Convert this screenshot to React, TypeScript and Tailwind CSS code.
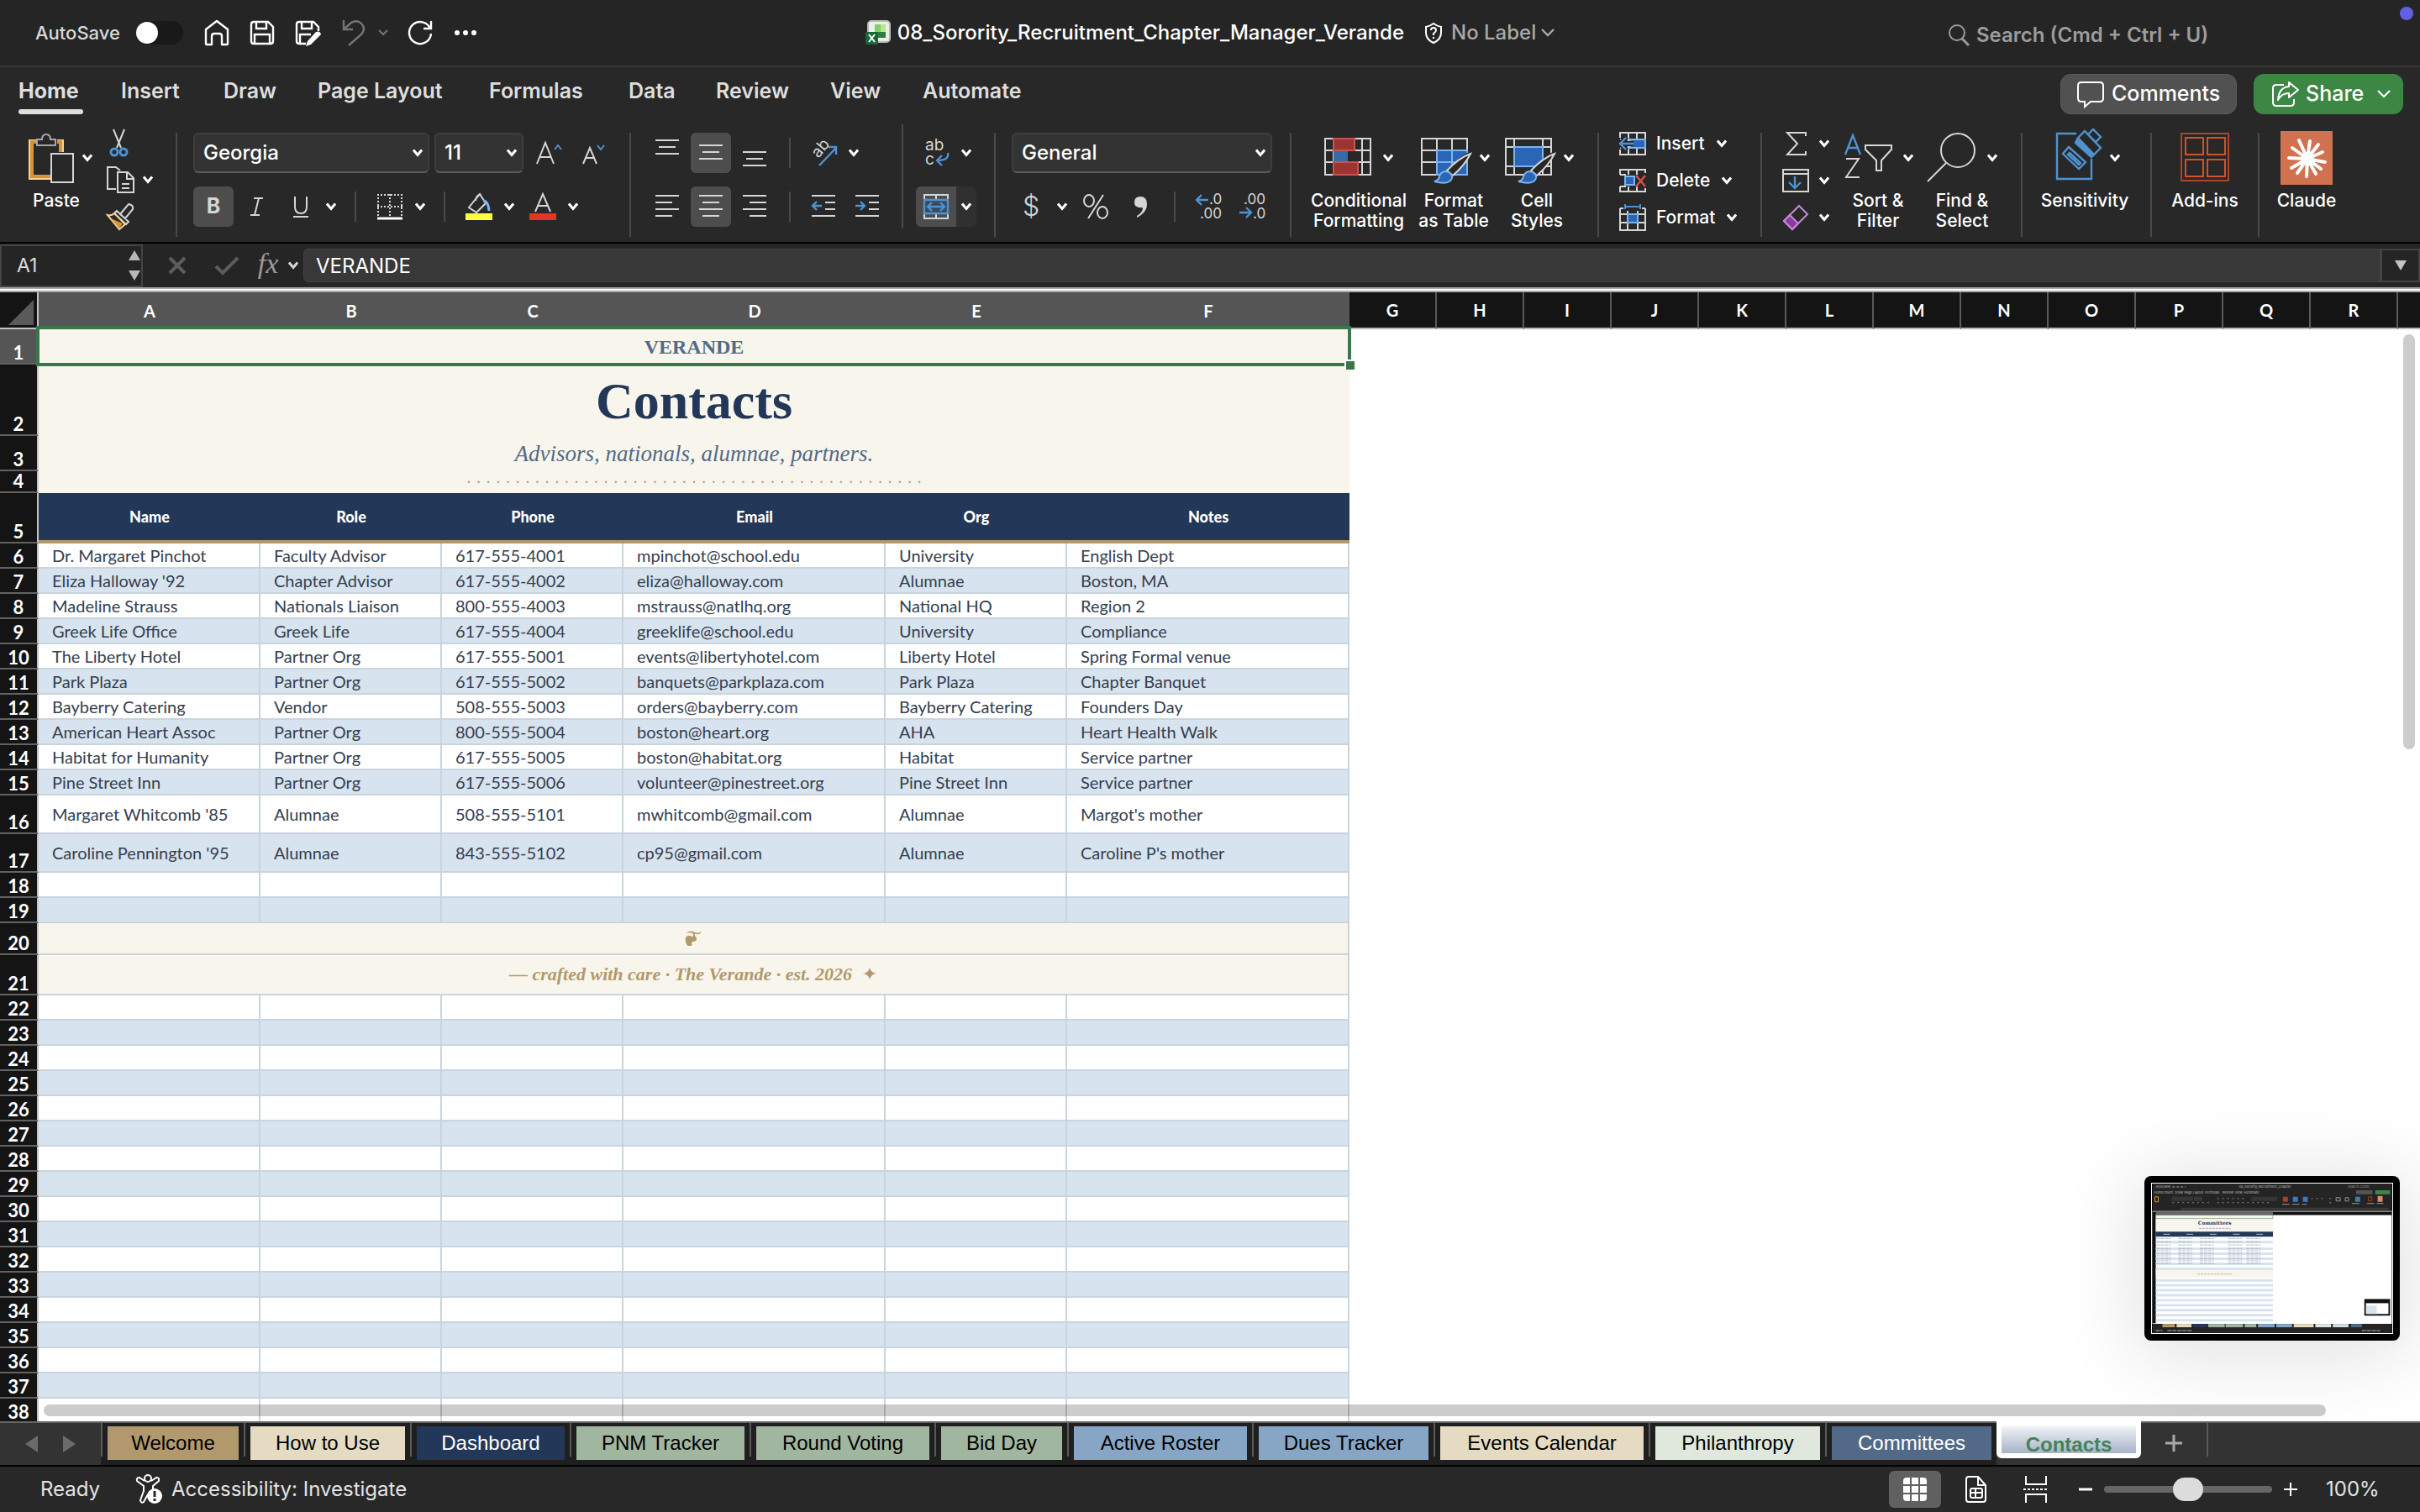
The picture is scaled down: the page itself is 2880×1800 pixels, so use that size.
import type { ReactNode } from 'react'
import clsx from 'clsx'

const UI = "font-[Inter,'Liberation_Sans',sans-serif]"
const SERIF = "font-['Liberation_Serif',serif]"

const menuTabs = [
  { name: 'Home', cls: 'w-[122px]' },
  { name: 'Insert', cls: 'w-[122px]' },
  { name: 'Draw', cls: 'w-[112px]' },
  { name: 'Page Layout', cls: 'w-[204px]' },
  { name: 'Formulas', cls: 'w-[166px]' },
  { name: 'Data', cls: 'w-[104px]' },
  { name: 'Review', cls: 'w-[136px]' },
  { name: 'View', cls: 'w-[110px]' },
  { name: 'Automate', cls: 'w-[130px]' },
]

const usedColumns = ['A', 'B', 'C', 'D', 'E', 'F']
const freeColumns = ['G', 'H', 'I', 'J', 'K', 'L', 'M', 'N', 'O', 'P', 'Q', 'R']
const headings = ['Name', 'Role', 'Phone', 'Email', 'Org', 'Notes']

const contacts = [
  ['Dr. Margaret Pinchot', 'Faculty Advisor', '617-555-4001', 'mpinchot@school.edu', 'University', 'English Dept'],
  ["Eliza Halloway '92", 'Chapter Advisor', '617-555-4002', 'eliza@halloway.com', 'Alumnae', 'Boston, MA'],
  ['Madeline Strauss', 'Nationals Liaison', '800-555-4003', 'mstrauss@natlhq.org', 'National HQ', 'Region 2'],
  ['Greek Life Office', 'Greek Life', '617-555-4004', 'greeklife@school.edu', 'University', 'Compliance'],
  ['The Liberty Hotel', 'Partner Org', '617-555-5001', 'events@libertyhotel.com', 'Liberty Hotel', 'Spring Formal venue'],
  ['Park Plaza', 'Partner Org', '617-555-5002', 'banquets@parkplaza.com', 'Park Plaza', 'Chapter Banquet'],
  ['Bayberry Catering', 'Vendor', '508-555-5003', 'orders@bayberry.com', 'Bayberry Catering', 'Founders Day'],
  ['American Heart Assoc', 'Partner Org', '800-555-5004', 'boston@heart.org', 'AHA', 'Heart Health Walk'],
  ['Habitat for Humanity', 'Partner Org', '617-555-5005', 'boston@habitat.org', 'Habitat', 'Service partner'],
  ['Pine Street Inn', 'Partner Org', '617-555-5006', 'volunteer@pinestreet.org', 'Pine Street Inn', 'Service partner'],
  ["Margaret Whitcomb '85", 'Alumnae', '508-555-5101', 'mwhitcomb@gmail.com', 'Alumnae', "Margot's mother"],
  ["Caroline Pennington '95", 'Alumnae', '843-555-5102', 'cp95@gmail.com', 'Alumnae', "Caroline P's mother"],
]

const sheetTabs = [
  { name: 'Welcome', cls: 'w-[156px] bg-[#b1996d] text-black' },
  { name: 'How to Use', cls: 'w-[184px] bg-[#e5dbc2] text-black' },
  { name: 'Dashboard', cls: 'w-[176px] bg-[#233858] text-white' },
  { name: 'PNM Tracker', cls: 'w-[200px] bg-[#a1b69f] text-black' },
  { name: 'Round Voting', cls: 'w-[206px] bg-[#a1b69f] text-black' },
  { name: 'Bid Day', cls: 'w-[144px] bg-[#a1b69f] text-black' },
  { name: 'Active Roster', cls: 'w-[206px] bg-[#87a6c6] text-black' },
  { name: 'Dues Tracker', cls: 'w-[202px] bg-[#87a6c6] text-black' },
  { name: 'Events Calendar', cls: 'w-[242px] bg-[#e5dbc2] text-black' },
  { name: 'Philanthropy', cls: 'w-[196px] bg-[#e0e8dd] text-black' },
  { name: 'Committees', cls: 'w-[190px] bg-[#526a87] text-white' },
]

function Chevron({ className = 'ml-[14px]' }: { className?: string }) {
  return (
    <svg viewBox="0 0 12 10" className={clsx('h-[10px] w-3 shrink-0', className)} fill="none" stroke="currentColor" strokeWidth="3" aria-hidden="true">
      <path d="M1 1.5l5 6 5-6" />
    </svg>
  )
}

function Icon({ w = 32, h = 32, className, children }: { w?: number; h?: number; className?: string; children: ReactNode }) {
  return (
    <svg width={w} height={h} viewBox={`0 0 ${w} ${h}`} className={clsx('shrink-0 overflow-visible', className)} fill="none" stroke="#d6d6d6" strokeWidth="2" aria-hidden="true">
      {children}
    </svg>
  )
}

function Tool({ label, className, active, children }: { label: string; className?: string; active?: boolean; children: ReactNode }) {
  return (
    <button
      type="button"
      aria-label={label}
      className={clsx('flex h-12 shrink-0 items-center justify-center', active && 'rounded-md bg-[#4d4d4d]', className)}
    >
      {children}
    </button>
  )
}

function Divider({ className = 'mt-[10px]' }: { className?: string }) {
  return <div className={clsx('h-[124px] w-0.5 shrink-0 bg-[#4a4a4a]', className)} />
}

function SmallDivider({ className }: { className?: string }) {
  return <div className={clsx('h-9 w-0.5 shrink-0 bg-[#4a4a4a]', className)} />
}

// A tall ribbon button: icon row on top, one or two caption lines below
function BigTool({ caption, className, rowClass, children }: { caption: string[]; className: string; rowClass?: string; children: ReactNode }) {
  return (
    <button type="button" className={clsx('flex shrink-0 flex-col pt-[10px] text-[21px] leading-6 font-medium text-white', className)}>
      <span className={clsx('flex h-15 items-center', rowClass)}>{children}</span>
      <span className="mt-[9px] flex flex-col items-center self-center whitespace-nowrap">
        {caption.map((line) => (
          <span key={line}>{line}</span>
        ))}
      </span>
    </button>
  )
}

function Picker({ label, value, className }: { label: string; value: string; className: string }) {
  return (
    <div className={clsx('grid h-12 shrink-0 items-center rounded-md border-2 border-[#3e3e3e] border-b-[#5c5c5c] bg-[#333]', className)}>
      <select
        aria-label={label}
        className="col-start-1 row-start-1 h-full w-full appearance-none pl-2.5 text-[24px] font-medium text-white"
        defaultValue={value}
      >
        <option>{value}</option>
      </select>
      <Chevron className="pointer-events-none col-start-1 row-start-1 mr-1.5 justify-self-end" />
    </div>
  )
}

function Lines({ rows }: { rows: [number, number, number][] }) {
  return (
    <Icon>
      {rows.map(([x1, x2, y]) => (
        <path key={y} strokeWidth="2" d={`M${x1} ${y}H${x2}`} />
      ))}
    </Icon>
  )
}

function TitleBar() {
  return (
    <header className="grid h-20 shrink-0 grid-cols-[1fr_auto_1fr] items-center border-b-2 border-[#3a3a3a] bg-[#252525] text-white">
      <div className="flex items-center pl-[42px]">
        <label htmlFor="autosave" className="w-[120px] text-[22px] font-medium text-[#d8d8d8]">AutoSave</label>
        <input
          id="autosave"
          type="checkbox"
          role="switch"
          className="h-7 w-14 appearance-none rounded-full bg-[#191919] before:block before:size-[26px] before:translate-y-px before:rounded-full before:bg-white"
        />
        <button type="button" aria-label="Home" className="ml-6">
          <Icon>
            <path stroke="#fff" strokeWidth="2.4" strokeLinejoin="round" d="M3 12L16 2l13 10v17a1 1 0 0 1-1 1h-6V20q0-3-3-3h-6q-3 0-3 3v10H4a1 1 0 0 1-1-1z" />
          </Icon>
        </button>
        <button type="button" aria-label="Save" className="ml-[22px]">
          <Icon>
            <g stroke="#fff" strokeWidth="2.4">
              <path d="M6 3h17l6 6v17q0 3-3 3H6q-3 0-3-3V6q0-3 3-3z" />
              <path d="M9 3v8h12V3M7 29V18h18v11" />
            </g>
          </Icon>
        </button>
        <button type="button" aria-label="Save as" className="ml-[22px]">
          <Icon>
            <g stroke="#fff" strokeWidth="2.4">
              <path d="M14 29H6q-3 0-3-3V6q0-3 3-3h17l6 6v5" />
              <path d="M9 3v8h12V3M7 29V18h13" />
            </g>
            <path fill="#fff" stroke="none" d="M26 15q5-2 6 3L20 30l-6 2 2-6z" />
          </Icon>
        </button>
        <button type="button" aria-label="Undo" className="ml-6 flex items-center text-[#757575]">
          <Icon>
            <path stroke="#757575" strokeWidth="2.4" d="M3 1v11h11M3 12L12 4q7-4 12 1 6 6 0 13L9 31" />
          </Icon>
          <svg viewBox="0 0 12 8" className="ml-3 h-2 w-3" fill="none" stroke="currentColor" strokeWidth="2"><path d="M1 1l5 5 5-5" /></svg>
        </button>
        <button type="button" aria-label="Redo" className="ml-[22px]">
          <Icon>
            <path stroke="#fff" strokeWidth="2.4" d="M29 2v9h-9M28 11A13 13 0 1 0 29 17" />
          </Icon>
        </button>
        <button type="button" aria-label="More" className="ml-6">
          <Icon><path fill="#fff" stroke="none" d="M7 16a3 3 0 1 1-6 0 3 3 0 0 1 6 0M17 16a3 3 0 1 1-6 0 3 3 0 0 1 6 0M27 16a3 3 0 1 1-6 0 3 3 0 0 1 6 0" /></Icon>
        </button>
      </div>
      <div className="flex items-center">
        <Icon w={30} h={30}>
          <rect x="3" y="1" width="26" height="25" rx="4" fill="#e9efe9" stroke="#b9b9b9" />
          <path fill="#7fd069" stroke="none" d="M11 5h7v9h-7z" />
          <path fill="#b5e88f" stroke="none" d="M18 5h6v9h-6z" />
          <path fill="#2e7d3c" stroke="none" d="M11 14h13v7H11z" />
          <rect y="14" width="15" height="15" rx="2" fill="#17693a" stroke="none" />
          <path stroke="#fff" strokeWidth="2" d="M4 17l7 9M11 17l-7 9" />
        </Icon>
        <h1 className="ml-2 text-[24px] font-medium">08_Sorority_Recruitment_Chapter_Manager_Verande</h1>
        <button type="button" className="ml-6 flex items-center text-[24px] font-medium text-[#a9a9a9]">
          <Icon w={22} h={26}>
            <path stroke="#fff" d="M11 2q4 3 9 4v7q0 8-9 12-9-4-9-12V6q5-1 9-4z" />
            <path stroke="#fff" d="M8 10q0-3 3-3t3 3q0 2-3 4v2M11 18v2" />
          </Icon>
          <span className="ml-2.5">No Label</span>
          <svg viewBox="0 0 16 10" className="ml-1.5 h-2.5 w-4" fill="none" stroke="currentColor" strokeWidth="2.4"><path d="M1 1l7 7 7-7" /></svg>
        </button>
      </div>
      <div className="relative flex h-full items-center justify-end pt-1.5 pr-[220px]">
        <Icon w={28} h={28}>
          <circle cx="11" cy="11" r="9" stroke="#9c9c9c" />
          <path stroke="#9c9c9c" strokeWidth="3" d="M17 18l8 8" />
        </Icon>
        <input
          type="search"
          aria-label="Search"
          placeholder="Search (Cmd + Ctrl + U)"
          className="ml-1.5 w-[308px] text-[24px] font-semibold placeholder:text-[#9c9c9c]"
        />
        <span className="absolute top-2 right-2 size-4 rounded-full bg-[#605fe6]" />
      </div>
    </header>
  )
}

function MenuBar() {
  return (
    <nav className="flex h-[68px] shrink-0 items-center pl-[22px]">
      {menuTabs.map((tab, i) => (
        <button key={tab.name} type="button" className={clsx('flex h-12 flex-col items-start pt-0.5 text-[25px] leading-8 text-[#dedede]', i === 0 ? 'font-bold' : 'font-semibold', tab.cls)}>
          {tab.name}
          {i === 0 && <span className="mt-1.5 h-1.5 w-[77px] rounded-full bg-[#dedede]" />}
        </button>
      ))}
      <button type="button" className="mb-1 ml-auto flex h-12 w-[210px] items-center rounded-xl border border-[#5a5a5a] bg-[#515151] pl-[18px] text-[25px] font-medium text-white">
        <Icon w={34}>
          <path stroke="#fff" d="M6 2h22q4 0 4 4v15q0 4-4 4H17l-7 6v-6H6q-4 0-4-4V6q0-4 4-4z" />
        </Icon>
        <span className="ml-2">Comments</span>
      </button>
      <button type="button" className="mr-5 mb-1 ml-5 flex h-12 w-[178px] items-center rounded-xl bg-[#3d8745] pl-5 text-[25px] font-medium text-white">
        <Icon w={34}>
          <path stroke="#fff" d="M16 5H7Q3 5 3 9v17q0 4 4 4h17q4 0 4-4v-4" />
          <path stroke="#fff" strokeLinejoin="round" d="M22 2l11 9-11 9v-5q-9 0-13 8Q10 8 22 7z" />
        </Icon>
        <span className="ml-2">Share</span>
        <svg viewBox="0 0 16 10" className="ml-4 h-2.5 w-4" fill="none" stroke="currentColor" strokeWidth="2"><path d="M1 1l7 7 7-7" /></svg>
      </button>
    </nav>
  )
}

function Brush() {
  return (
    <>
      <path stroke="#282828" strokeWidth="6" d="M57 26q-14 9-26 22" />
      <path fill="#282828" d="M59 25q-14 5-28 20l7 6q14-12 21-26z" />
      <path fill="#2b65b5" stroke="#7db4ee" d="M16 58q5-1 6-6 2-6 8-6 8 2 7 8-3 9-21 4z" />
    </>
  )
}

function Ribbon() {
  return (
    <div className="flex h-[140px] shrink-0 items-start text-white">
      <div className="flex w-[209px] shrink-0 pl-[34px]">
        <BigTool caption={['Paste']} className="w-[76px] pr-2.5">
          <Icon w={54} h={60}>
            <path stroke="#f4d590" strokeWidth="2" d="M9 9H1v46h25M34 9h7v14" />
            <path stroke="#d9913a" strokeWidth="4" d="M11 11H4v41h22M34 11h4v12" />
            <path stroke="#a6a6a6" fill="#282828" d="M10 15V8h6q0-6 5-6t5 6h6v7z" />
            <rect x="27" y="25" width="26" height="34" />
          </Icon>
          <Chevron className="ml-2.5" />
        </BigTool>
        <div className="ml-4 flex flex-col gap-3 pt-1.5">
          <Tool label="Cut" className="h-8! w-8">
            <Icon>
              <path d="M9 0l9 22M22 0L13 22" />
              <circle cx="10" cy="27" r="4" stroke="#4f92d1" strokeWidth="3" />
              <circle cx="21" cy="27" r="4" stroke="#4f92d1" strokeWidth="3" />
            </Icon>
          </Tool>
          <Tool label="Copy" className="h-8!">
            <Icon w={34}>
              <path d="M12 27H2V1h10l5 4M14 7h12l7 7v17H14zM25 8v7h7M19 21h9M19 26h9" />
            </Icon>
            <Chevron className="ml-2.5" />
          </Tool>
          <Tool label="Format painter" className="h-8! w-8">
            <Icon>
              <path fill="#282828" d="M17 13l10-12q6 1 5 6L23 18zM13 9l14 13-3 3L10 12z" />
              <path fill="#282828" stroke="#f4d590" d="M10 12l13 13-7 6L2 14q5 1 8-2z" />
              <path fill="#d9913a" stroke="none" d="M6 18l14 6-4 6z" />
            </Icon>
          </Tool>
        </div>
      </div>
      <Divider />

      <div className="flex w-[538px] shrink-0 flex-col gap-4 pt-[10px] pl-[19px]">
        <div className="flex items-center">
          <Picker label="Font" value="Georgia" className="w-[281px]" />
          <Picker label="Font size" value="11" className="ml-1.5 w-[106px]" />
          <Tool label="Increase font size" className="ml-[14px]">
            <Icon>
              <path d="M2 29L12 4l10 25M5 21h14" />
              <path stroke="#4f92d1" d="M23 12l4-5 4 5" />
            </Icon>
          </Tool>
          <Tool label="Decrease font size" className="ml-[22px]">
            <Icon>
              <path d="M3 29l8-19 8 19M6 22h10" />
              <path stroke="#4f92d1" d="M20 7l4 5 4-5" />
            </Icon>
          </Tool>
        </div>
        <div className="flex items-center">
          <Tool label="Bold" active className="w-12 text-[25px] font-bold text-[#d6d6d6]">B</Tool>
          <Tool label="Italic" className="ml-1 w-12">
            <Icon><path d="M12 6h11M8 26h11M18 6l-5 20" /></Icon>
          </Tool>
          <Tool label="Underline" className="ml-1">
            <Icon w={48}><path d="M17 4v12q0 8 7 8t7-8V4M15 28h18" /></Icon>
            <Chevron className="ml-1.5" />
          </Tool>
          <SmallDivider className="ml-[22px]" />
          <Tool label="Borders" className="ml-6">
            <Icon>
              <path strokeDasharray="2 2" d="M1 2h30M1 16h30M2 1v26M16 1v26M30 1v26" />
              <path stroke="#fff" strokeWidth="3" d="M1 30h30" />
            </Icon>
            <Chevron />
          </Tool>
          <SmallDivider className="ml-[22px]" />
          <Tool label="Fill color" className="ml-6">
            <Icon>
              <path d="M17 1q-5 3-5 8M12 7L4 17l9 6 11-11L17 1z" />
              <path stroke="#7db4ee" strokeWidth="3" d="M21 9q6 0 7 12" />
              <path fill="#ffff40" stroke="none" d="M0 24h32v8H0z" />
            </Icon>
            <Chevron />
          </Tool>
          <Tool label="Font color" className="ml-[18px]">
            <Icon>
              <path d="M7 22L16 1l9 21M10 15h12" />
              <path fill="#e53422" stroke="none" d="M0 24h32v8H0z" />
            </Icon>
            <Chevron />
          </Tool>
        </div>
      </div>
      <Divider />

      <div className="flex w-[322px] shrink-0 flex-col gap-4 pt-[10px] pl-[19px]">
        <div className="flex items-center">
          <Tool label="Align top" className="w-12"><Lines rows={[[2, 30, 1], [6, 26, 9], [2, 30, 17]]} /></Tool>
          <Tool label="Align middle" active className="ml-1 w-12"><Lines rows={[[2, 30, 7], [6, 26, 15], [2, 30, 23]]} /></Tool>
          <Tool label="Align bottom" className="ml-1 w-12"><Lines rows={[[2, 30, 15], [6, 26, 23], [2, 30, 31]]} /></Tool>
          <SmallDivider className="ml-[17px]" />
          <Tool label="Orientation" className="ml-[23px]">
            <Icon>
              <text transform="translate(10 23) rotate(-50)" fill="#d6d6d6" stroke="none" fontSize="19">ab</text>
              <path stroke="#4f92d1" strokeWidth="2.4" d="M11 31L31 10M22 9h9v9" />
            </Icon>
            <Chevron />
          </Tool>
        </div>
        <div className="flex items-center">
          <Tool label="Align left" className="w-12"><Lines rows={[[2, 30, 3], [2, 22, 11], [2, 30, 19], [2, 22, 27]]} /></Tool>
          <Tool label="Align center" active className="ml-1 w-12"><Lines rows={[[2, 30, 3], [6, 26, 11], [2, 30, 19], [6, 26, 27]]} /></Tool>
          <Tool label="Align right" className="ml-1 w-12"><Lines rows={[[2, 30, 3], [10, 30, 11], [2, 30, 19], [10, 30, 27]]} /></Tool>
          <SmallDivider className="ml-[17px]" />
          <Tool label="Decrease indent" className="ml-[23px]">
            <Icon>
              <path d="M2 3h28M18 11h12M18 19h12M2 27h28" />
              <path stroke="#4f92d1" strokeWidth="2.4" d="M14 15H3M8 10l-5 5 5 5" />
            </Icon>
          </Tool>
          <Tool label="Increase indent" className="ml-5">
            <Icon>
              <path d="M2 3h28M18 11h12M18 19h12M2 27h28" />
              <path stroke="#4f92d1" strokeWidth="2.4" d="M2 15h11M8 10l5 5-5 5" />
            </Icon>
          </Tool>
        </div>
      </div>
      <Divider className="mt-0" />

      <div className="flex w-[108px] shrink-0 flex-col gap-4 pt-[10px] pl-[15px]">
        <div className="flex items-center">
          <Tool label="Wrap text" className="w-12">
            <Icon>
              <text x="3" y="13" fill="#d6d6d6" stroke="none" fontSize="19">ab</text>
              <text x="3" y="30" fill="#d6d6d6" stroke="none" fontSize="19">c</text>
              <path stroke="#4f92d1" strokeWidth="2.4" d="M30 16q2 9-13 9M23 19l-6 6 6 6" />
            </Icon>
          </Tool>
          <Tool label="Wrap options" className="w-6"><Chevron className="" /></Tool>
        </div>
        <div className="flex items-center">
          <Tool label="Merge and center" active className="w-12 rounded-r-none">
            <Icon>
              <path d="M2 8V2h28v6M16 2v6M2 24v6h28v-6M16 24v6" />
              <path fill="#3a4a5a" stroke="#4f92d1" strokeWidth="2.4" d="M2 8h28v16H2z" />
              <path stroke="#4f92d1" strokeWidth="2.4" d="M6 16h20M11 11l-5 5 5 5M21 11l5 5-5 5" />
            </Icon>
          </Tool>
          <Tool label="Merge options" className="w-6 rounded-r-md bg-[#303030]"><Chevron className="" /></Tool>
        </div>
      </div>
      <Divider />

      <div className="flex w-[350px] shrink-0 flex-col gap-4 pt-[10px] pl-[19px]">
        <Picker label="Number format" value="General" className="w-[310px]" />
        <div className="flex items-center">
          <Tool label="Currency" className="ml-[7px]">
            <span className="w-8 text-[32px] font-light text-[#d6d6d6]">$</span>
            <Chevron className="ml-[15px]" />
          </Tool>
          <Tool label="Percent" className="ml-[18px]">
            <Icon>
              <ellipse cx="8" cy="9" rx="6" ry="7" />
              <ellipse cx="24" cy="23" rx="6" ry="7" />
              <path d="M25 2L7 30" />
            </Icon>
          </Tool>
          <Tool label="Comma style" className="ml-[21px]">
            <Icon><path fill="#d6d6d6" stroke="none" d="M16 4q8 0 8 9 0 10-12 16v-2q7-4 7-10-10 1-10-6 0-7 7-7z" /></Icon>
          </Tool>
          <SmallDivider className="ml-6" />
          <Tool label="Increase decimal" className="ml-6">
            <Icon>
              <g fill="#d6d6d6" stroke="none" fontSize="17">
                <text x="16" y="13">.0</text>
                <text x="5" y="30">.00</text>
              </g>
              <path stroke="#4f92d1" strokeWidth="2.4" d="M15 8H1M7 2L1 8l6 6" />
            </Icon>
          </Tool>
          <Tool label="Decrease decimal" className="ml-5">
            <Icon>
              <g fill="#d6d6d6" stroke="none" fontSize="17">
                <text x="5" y="13">.00</text>
                <text x="16" y="30">.0</text>
              </g>
              <path stroke="#4f92d1" strokeWidth="2.4" d="M0 23h14M8 17l6 6-6 6" />
            </Icon>
          </Tool>
        </div>
      </div>
      <Divider />

      <div className="flex w-[364px] shrink-0 pl-6">
        <BigTool caption={['Conditional', 'Formatting']} className="w-28" rowClass="pl-[15px]">
          <Icon w={56} h={60}>
            <path d="M1 7h54v43H1zM1 21h54M1 35h54M11 7v43M36 7v43M45 7v43" />
            <path fill="#9c3431" stroke="#c65551" d="M11 7h25v14H11zM11 35h29v15H11z" />
            <path fill="#346ba8" stroke="none" d="M11 22h17v12H11z" />
            <path fill="#282828" stroke="none" d="M28 22h16v12H28z" />
          </Icon>
          <Chevron />
        </BigTool>
        <BigTool caption={['Format', 'as Table']} className="ml-[14px] w-[86px]" rowClass="pl-1">
          <Icon w={60} h={60}>
            <path d="M1 7h54v43H1zM1 21h54M1 35h54M19 7v43M37 7v43" />
            <path fill="#2b65b5" stroke="#7db4ee" d="M19 21h36v29H19zM37 21v29M19 35h36" />
            <Brush />
          </Icon>
          <Chevron className="ml-2.5" />
        </BigTool>
        <BigTool caption={['Cell', 'Styles']} className="ml-3 w-[88px]" rowClass="pl-1.5">
          <Icon w={60} h={60}>
            <path d="M1 7h54v43H1zM1 17h54M1 40h54M11 7v43M45 7v43" />
            <path fill="#2b65b5" stroke="#7db4ee" d="M11 17h34v23H11z" />
            <Brush />
          </Icon>
          <Chevron className="ml-2.5" />
        </BigTool>
      </div>
      <Divider />

      <div className="flex w-[192px] shrink-0 flex-col items-start pt-px pl-6 text-[21px] font-medium">
        <button type="button" className="flex h-11 items-center">
          <Icon>
            <path d="M1 9V3h30v26H1v-6M11 3v26M21 3v26M1 11h30M1 21h30" />
            <path fill="#2b65b5" stroke="#7db4ee" d="M13 11h18v10H13z" />
            <path stroke="#282828" strokeWidth="6" d="M17 16H2M9 8l-8 8 8 8" />
            <path stroke="#4f92d1" strokeWidth="2.4" d="M17 16H2M8 9l-7 7 7 7" />
          </Icon>
          <span className="ml-3">Insert</span>
          <Chevron />
        </button>
        <button type="button" className="flex h-11 items-center">
          <Icon>
            <path d="M1 9V3h30v4M1 23v6h30v-4M11 3v6M21 3v6M11 23v6M21 23v6M1 9h7M1 23h7" />
            <path fill="#2b65b5" stroke="#7db4ee" d="M7 11h11v10H7z" />
            <path stroke="#d8524b" strokeWidth="2.4" d="M20 10l11 13M31 10L20 23" />
          </Icon>
          <span className="ml-3">Delete</span>
          <Chevron />
        </button>
        <button type="button" className="flex h-11 items-center">
          <Icon>
            <path d="M1 5v26h30V5M10 8v23M22 8v23M1 12h30M1 22h30M1 5h4M27 5h4" />
            <path fill="#2b65b5" stroke="#7db4ee" d="M10 12h12v10H10z" />
            <path stroke="#4f92d1" d="M7 3h18M7 0v6M25 0v6" />
          </Icon>
          <span className="ml-3">Format</span>
          <Chevron />
        </button>
      </div>
      <Divider />

      <div className="flex w-[308px] shrink-0 pl-6">
        <div className="flex flex-col pt-px">
          <Tool label="AutoSum" className="h-11!">
            <Icon><path d="M28 7V3H6l12 13L6 29h22v-4" /></Icon>
            <Chevron className="ml-3" />
          </Tool>
          <Tool label="Fill" className="h-11!">
            <Icon>
              <path d="M1 3h30v26H1zM1 8h30" />
              <path stroke="#4f92d1" strokeWidth="2.4" d="M15 11v14M8 18l7 7 7-7" />
            </Icon>
            <Chevron className="ml-3" />
          </Tool>
          <Tool label="Clear" className="h-11!">
            <Icon>
              <path stroke="#c58bd6" d="M20 2l10 10-18 18L2 20z" />
              <path fill="#8c3a9e" stroke="#c58bd6" d="M9 13l10 10-7 7L2 20z" />
            </Icon>
            <Chevron className="ml-3" />
          </Tool>
        </div>
        <BigTool caption={['Sort &', 'Filter']} className="ml-4 w-[84px]">
          <Icon w={60} h={60}>
            <path stroke="#4f92d1" strokeWidth="2.4" d="M3 26l9-23 9 23M6 18h12" />
            <path d="M4 31h15L4 53h16M27 15h31v5L46 33v12h-6V33L27 20z" />
          </Icon>
          <Chevron className="ml-3" />
        </BigTool>
        <BigTool caption={['Find &', 'Select']} className="ml-4 w-[84px]">
          <Icon w={60} h={60}>
            <circle cx="37" cy="21" r="20" />
            <path d="M23 36L1 58" />
          </Icon>
          <Chevron className="ml-3" />
        </BigTool>
      </div>
      <Divider />

      <div className="flex w-[152px] shrink-0 pl-[22px]">
        <BigTool caption={['Sensitivity']} className="w-[104px]" rowClass="pl-[18px]">
          <Icon w={56} h={60}>
            <g stroke="#4f92d1" strokeWidth="2.4">
              <path d="M24 1H1v54h41V31" />
              <path d="M15 17l20 18-8 8L8 25zM16 24l13 12-2 2-13-12z" />
              <path fill="#282828" d="M26 6L34-2l19 20-8 8z" />
              <path fill="#4f92d1" d="M25 8l20 18-3 3L23 12z" />
              <path fill="#282828" d="M38 2l6-6 9 9-6 6z" />
            </g>
          </Icon>
          <Chevron className="ml-2" />
        </BigTool>
      </div>
      <Divider />

      <div className="flex w-[126px] shrink-0 justify-center">
        <BigTool caption={['Add-ins']} className="items-center">
          <Icon w={58} h={60}>
            <rect x="1" y="1" width="56" height="56" stroke="#ad4527" />
            <path stroke="#d1522b" d="M6 6h21v20H6zM32 6h21v20H32zM6 32h21v20H6zM32 32h21v20H32z" />
          </Icon>
        </BigTool>
      </div>
      <Divider />

      <div className="flex w-28 shrink-0 justify-center">
        <BigTool caption={['Claude']} className="items-center">
          <Icon w={62} h={64}>
            <path fill="#d0714f" stroke="none" d="M0 0h62v64H0z" />
            <path
              stroke="#fff"
              strokeWidth="4"
              strokeLinecap="round"
              d="M32 33L22 11M32 33l3-21M32 33l13-17M32 33l18-8M32 33l21 4M32 33l16 12M32 33l10 18M32 33l-1 21M32 33L20 50M32 33L13 44M32 33L10 32M32 33L14 20"
            />
          </Icon>
        </BigTool>
      </div>
    </div>
  )
}

function FormulaBar() {
  return (
    <div className="flex h-[54px] shrink-0 items-center border-t-2 border-black bg-[#252525]">
      <div className="flex h-[51px] w-[170px] items-center border-2 border-[#444]">
        <input aria-label="Name box" defaultValue="A1" className="min-w-0 flex-1 pl-[18px] text-[23px] text-[#dedede]" />
        <Icon w={16} h={38}><path fill="#b9b9b9" stroke="none" d="M1 13L8 1l7 12zM1 25l7 12 7-12z" /></Icon>
      </div>
      <button type="button" aria-label="Cancel" className="ml-[29px]">
        <Icon w={24} h={24}><path stroke="#5c5c5c" strokeWidth="4" d="M3 3l18 18M21 3L3 21" /></Icon>
      </button>
      <button type="button" aria-label="Enter" className="ml-8">
        <Icon w={30} h={24}><path stroke="#5c5c5c" strokeWidth="4" d="M2 13l8 8L28 3" /></Icon>
      </button>
      <button type="button" aria-label="Insert function" className="ml-4 flex items-center text-[#d6d6d6]">
        <span className={clsx('w-9 pb-1 text-[34px] leading-10 text-[#9a9a9a] italic', SERIF)}>fx</span>
        <Chevron className="ml-1.5" />
      </button>
      <input
        aria-label="Formula"
        defaultValue="VERANDE"
        className="ml-1.5 h-10 min-w-0 flex-1 rounded-l-md border border-[#444] bg-[#383838] pl-[14px] text-[24px] text-white"
      />
      <button type="button" aria-label="Expand formula bar" className="flex h-10 w-[47px] items-center justify-center border-2 border-[#444]">
        <Icon w={14} h={14}><path fill="#c4c4c4" stroke="none" d="M0 1h14L7 13z" /></Icon>
      </button>
    </div>
  )
}

function RowHead({ n, selected }: { n: number; selected?: boolean }) {
  return (
    <th
      scope="row"
      className={clsx(
        'border-r-2 border-b-2 border-r-[#c4c4c4] border-b-[#626262] p-0 text-center align-bottom text-[22px] leading-6 font-bold text-white',
        selected ? 'bg-[#555]' : 'bg-[#141414]',
      )}
    >
      {n}
    </th>
  )
}

function Sheet() {
  const row = (n: number, values: string[], height: string) => (
    <tr key={n} className={height}>
      <RowHead n={n} />
      {usedColumns.map((col, i) => (
        <td
          key={col}
          className={clsx(
            'border-r-2 border-b-2 border-[#c8d4de] py-0 pr-0 pl-4 text-[20px] leading-6 whitespace-nowrap text-[#34404f]',
            n % 2 ? 'bg-[#d7e3ee]' : 'bg-white',
          )}
        >
          {values[i]}
        </td>
      ))}
    </tr>
  )

  return (
    <main className="relative min-h-0 flex-1 overflow-hidden bg-white font-[Lato,'Open_Sans',sans-serif]">
      <table className="w-full table-fixed border-separate border-spacing-0">
        <colgroup>
          <col className="w-[46px]" />
          <col className="w-[264px]" />
          <col className="w-[216px]" />
          <col className="w-[216px]" />
          <col className="w-[312px]" />
          <col className="w-[216px]" />
          <col className="w-[336px]" />
          {freeColumns.map((col) => (
            <col key={col} className="w-[104px]" />
          ))}
          <col />
        </colgroup>
        <thead>
          <tr className="h-11 text-[20px] leading-6 text-white">
            <th className="border-r-2 border-b-2 border-[#c4c4c4] bg-[#141414] p-0">
              <Icon w={43} h={40}><path fill="#5a5a5a" stroke="none" d="M40 8v30H10z" /></Icon>
            </th>
            {usedColumns.map((col) => (
              <th key={col} scope="col" className="bg-[#555] p-0">{col}</th>
            ))}
            {freeColumns.map((col) => (
              <th key={col} scope="col" className="border-r-2 border-b-2 border-r-[#5a5a5a] border-b-[#b9b9b9] bg-[#141414] p-0">{col}</th>
            ))}
            <th className="border-b-2 border-[#b9b9b9] bg-[#141414] p-0" />
          </tr>
        </thead>
        <tbody>
          <tr className="h-[42px]">
            <RowHead n={1} selected />
            <td colSpan={6} className={clsx('relative bg-[#f8f5ec] p-0 text-center text-[24px] leading-6 font-bold text-[#526a87]', SERIF)}>
              VERANDE
              {/* selection frame with its fill handle */}
              <span className="absolute -top-1 -right-0.5 -bottom-0.5 -left-[3px] border-4 border-[#3b7549]" />
              <span className="absolute -right-1.5 -bottom-1.5 size-3 border-t-2 border-l-2 border-white bg-[#3b7549]" />
            </td>
          </tr>
          <tr className="h-[85px]">
            <RowHead n={2} />
            <td colSpan={6} className={clsx('bg-[#f8f5ec] p-0 text-center text-[62px] leading-[80px] font-bold text-[#233858]', SERIF)}>Contacts</td>
          </tr>
          <tr className="h-[42px]">
            <RowHead n={3} />
            <td colSpan={6} className={clsx('bg-[#f8f5ec] p-0 text-center text-[27px] leading-9 text-[#526a87] italic', SERIF)}>
              Advisors, nationals, alumnae, partners.
            </td>
          </tr>
          <tr className="h-[26px]">
            <RowHead n={4} />
            <td colSpan={6} className={clsx('bg-[#f8f5ec] p-0 text-center text-[20px] leading-6 text-[#aaa596]', SERIF)}>
              {Array(47).fill('·').join(' ')}
            </td>
          </tr>
          <tr className="h-15">
            <RowHead n={5} />
            {headings.map((text) => (
              <td key={text} className="border-b-4 border-[#b3966a] bg-[#233858] p-0 text-center text-[18px] leading-6 font-black text-white">{text}</td>
            ))}
          </tr>
          {contacts.map((values, i) => row(i + 6, values, i < 10 ? 'h-[30px]' : 'h-[46px]'))}
          {row(18, [], 'h-[30px]')}
          {row(19, [], 'h-[30px]')}
          <tr className="h-[38px]">
            <RowHead n={20} />
            <td colSpan={6} className="border-r-2 border-b-2 border-[#c8d4de] bg-[#f8f5ec] p-0">
              <svg width="20" height="18" viewBox="0 0 20 18" className="mx-auto block" fill="#b1996d" role="img" aria-label="Floral heart">
                <path d="M2 3Q6-1 11 1.500T20 1q-2 4-6 3L11 3.500q-5-2-9-.5z" />
                <path d="M9 3q2 2 1 5h2q1-3-1-5z" />
                <path d="M1 8q3-4 7-1 6-2 6 3 0 3-5 3-2 2 0 4-5 3-7-1Q0 12 1 8z" />
              </svg>
            </td>
          </tr>
          <tr className="h-12">
            <RowHead n={21} />
            <td colSpan={6} className={clsx('border-r-2 border-b-2 border-[#c8d4de] bg-[#f8f5ec] p-0 text-center text-[22px] leading-6 font-bold text-[#b1996d]', SERIF)}>
              <i>— crafted with care · The Verande · est. 2026</i> <span className="ml-1.5 font-['DejaVu_Sans',sans-serif] font-normal">✦</span>
            </td>
          </tr>
          {Array.from({ length: 17 }, (_, i) => row(i + 22, [], 'h-[30px]'))}
        </tbody>
      </table>
      <div className="absolute top-[50px] right-1.5 h-[494px] w-[14px] rounded-full bg-[#ccc]" />
      <div className="absolute right-28 bottom-1.5 left-[52px] h-[14px] rounded-full bg-black/20" />
      <Preview />
    </main>
  )
}

// Floating capture thumbnail: a miniature of the Committees sheet
function Preview() {
  const tabColors = ['#b1996d', '#e5dbc2', '#233858', '#a1b69f', '#a1b69f', '#a1b69f', '#87a6c6', '#87a6c6', '#e5dbc2', '#e0e8dd', '#cfe0e4', '#526a87']
  const tabStarts = [12, 29, 49, 67, 88, 111, 127, 149, 170, 196, 217, 239]
  const tabWidths = [15, 18, 16, 20, 21, 14, 20, 19, 24, 19, 19, 13]
  const textCols = [5, 31, 57, 91, 113]
  return (
    <div className="absolute right-6 bottom-24 rounded-lg bg-black p-2 shadow-[0_8px_90px_10px_rgba(0,0,0,0.12)]">
      <svg width="288" height="180" viewBox="0 0 288 180" className="border border-white" role="img" aria-label="Preview">
        <path fill="#242424" d="M0 0h288v180H0z" />
        <g fill="#bbb" fontSize="4" fontFamily="Inter">
          <text x="4" y="5">AutoSave</text>
          <text x="104" y="5">08_Sorority_Recruitment_Chapter</text>
          <text x="235" y="5" fill="#999">Search (Cmd)</text>
          <text x="2" y="12">Home</text>
          <text x="14" y="12">Insert</text>
          <text x="27" y="12">Draw</text>
          <text x="38" y="12">Page Layout</text>
          <text x="63" y="12">Formulas</text>
          <text x="84" y="12">Review</text>
          <text x="99" y="12">View</text>
          <text x="110" y="12">Automate</text>
        </g>
        <path stroke="#aaa" strokeDasharray="3 2" d="M24 4h16" />
        <rect x="245" y="8" width="20" height="5" rx="1" fill="#555" />
        <rect x="268" y="8" width="18" height="5" rx="1" fill="#3d8745" />
        <path fill="#363636" d="M23 16h26v5H23zM50 16h10v5H50zM119 16h31v5h-31z" />
        <path stroke="#d9913a" fill="none" d="M3 16h4v6H3z" />
        <path stroke="#888" strokeWidth="1" strokeDasharray="2 4" d="M24 23h44M78 18h32M78 23h64M191 18h18M213 18h4M213 23h4" />
        <path stroke="#999" strokeDasharray="9 3" d="M156 25h30M240 24h10M258 24h20" />
        <path fill="#b03a36" d="M157 16h6v6h-6z" />
        <path fill="#3d79bd" d="M169 16h6v6h-6zM181 16h6v6h-6zM244 16h6v6h-6z" />
        <path fill="none" stroke="#999" d="M221 17h5v4h-5zM232 17h4v4h-4z" />
        <path fill="none" stroke="#a8431f" d="M260 16h4v5h-4z" />
        <path fill="#e08a68" d="M271 15h6v7h-6z" />
        <path fill="#383838" d="M34 29h250v3H34z" />
        <path fill="#fff" d="M0 33h288v136H0z" />
        <path fill="#111" d="M0 34h288v4H0zM0 34h4v134H0z" />
        <path fill="#666" d="M4 34h141v4H4z" />
        <path fill="#f8f5ec" d="M4 38h141v20H4zM4 103h141v10H4z" />
        <path stroke="#3b7549" strokeWidth="0.5" fill="none" d="M4 38h141v4H4z" />
        <text x="75" y="50" textAnchor="middle" fontSize="6" fontWeight="bold" fontFamily="DejaVu Serif" textRendering="geometricPrecision" fill="#233858">Committees</text>
        <path stroke="#a9b3c0" d="M56 54h38" strokeDasharray="3 1" />
        <path fill="#233858" d="M4 58h141v6H4z" />
        <path stroke="#b8c0cc" strokeDasharray="8 20" d="M13 61h125" />
        {[69, 77, 83, 89, 95, 101].map((y) => (
          <path key={y} fill="#d7e3ee" d={`M4 ${y}h141v3H4z`} />
        ))}
        {[66, 70, 74, 78, 81, 84, 87, 90, 93, 96].map((y) =>
          textCols.map((x) => <path key={`${x}-${y}`} stroke="#8e97a3" strokeWidth="0.7" strokeDasharray="4 1" d={`M${x} ${y}h17`} />),
        )}
        <path stroke="#c9b48e" strokeDasharray="3 1" d="M54 109h42" />
        {[115, 121, 127, 133, 139, 145, 151, 157, 163].map((y) => (
          <path key={y} fill="#d7e3ee" d={`M4 ${y}h141v3H4z`} />
        ))}
        <path fill="#111" d="M255 139h31v20h-31z" />
        <path fill="#fff" d="M257 144h27v13h-27z" />
        <path fill="#d7e3ee" d="M257 147h13v10h-13z" />
        {tabColors.map((fill, i) => (
          <rect key={tabStarts[i]} x={tabStarts[i]} y="169" width={tabWidths[i]} height="4" fill={fill} />
        ))}
        <path stroke="#bbb" strokeDasharray="5 1" d="M4 177h8M18 177h30M252 177h22" />
      </svg>
    </div>
  )
}

function SheetTabs() {
  return (
    <nav className="flex h-[52px] shrink-0 items-start bg-[#333] font-['Liberation_Sans',sans-serif] text-[24px]">
      <div className="flex h-full w-[120px] items-center gap-7 border-t-2 border-[#666] pl-[30px]">
        <button type="button" aria-label="Previous sheet"><Icon w={16} h={20}><path fill="#6b6b6b" stroke="none" d="M15 0v20L0 10z" /></Icon></button>
        <button type="button" aria-label="Next sheet"><Icon w={16} h={20}><path fill="#6b6b6b" stroke="none" d="M1 0v20l15-10z" /></Icon></button>
      </div>
      <div className="flex h-full items-start border-t-2 border-[#666] bg-[#1f1f1f]">
        {sheetTabs.map((tab) => (
          <div key={tab.name} className="flex">
            <div className="h-10 w-0.5 bg-[#5a5a5a]" />
            <button type="button" className={clsx('mx-1.5 mt-1 h-10 whitespace-nowrap', tab.cls)}>{tab.name}</button>
          </div>
        ))}
      </div>
      <button type="button" aria-current="page" className="h-11 w-[172px] rounded-b-md border-6 border-white bg-linear-to-b from-[#f0f2f6] to-[#a8b3c8] pt-1 font-bold text-[#43835a]">
        Contacts
      </button>
      <div className="flex h-full flex-1 items-start border-t-2 border-[#666]">
        <button type="button" aria-label="Add sheet" className="flex h-12 w-[78px] items-center justify-center">
          <Icon w={22} h={22}><path stroke="#a9a9a9" strokeWidth="3" d="M11 1v20M1 11h20" /></Icon>
        </button>
        <div className="h-10 w-0.5 bg-[#5a5a5a]" />
      </div>
    </nav>
  )
}

function StatusBar() {
  return (
    <footer className="flex h-14 shrink-0 items-center border-t-2 border-black bg-[#282828] text-[24px] text-[#e4e4e4]">
      <span className="ml-12 w-[112px]">Ready</span>
      <button type="button" className="flex items-center">
        <Icon w={34} h={36}>
          <circle cx="16" cy="5" r="4" stroke="#fff" />
          <path stroke="#fff" strokeLinejoin="round" d="M12 8L6 4Q2 4 3 8l8 6v6L7 31q1 4 4 2l5-9M20 8l6-4q4 0 3 4l-7 6v4" />
          <circle cx="24" cy="26" r="9" fill="#fff" stroke="none" />
          <path stroke="#282828" strokeWidth="3" d="M24 20v7M24 29v3" />
        </Icon>
        <span className="ml-2.5">Accessibility: Investigate</span>
      </button>
      <button type="button" aria-label="Normal view" className="ml-auto flex h-11 w-[62px] items-center justify-center rounded-md bg-[#606060]">
        <Icon w={28} h={28}>
          <rect width="28" height="28" rx="4" fill="#fff" stroke="none" />
          <path stroke="#606060" d="M9 0v28M19 0v28M0 9h28M0 19h28" />
        </Icon>
      </button>
      <button type="button" aria-label="Page layout view" className="ml-[29px]">
        <Icon w={26} h={32}>
          <g stroke="#fff">
            <path d="M4 1h11l9 10v17q0 3-3 3H4q-3 0-3-3V4q0-3 3-3zM15 1v10h9" />
            <rect x="6" y="15" width="14" height="11" rx="2" />
            <path d="M6 20h14M12 15v11" />
          </g>
        </Icon>
      </button>
      <button type="button" aria-label="Page break view" className="ml-[43px]">
        <Icon w={30}>
          <path stroke="#fff" d="M3 0v10h24V0M3 32V22h24v10" />
          <path stroke="#fff" strokeDasharray="3 2" d="M0 16h30" />
        </Icon>
      </button>
      <button type="button" aria-label="Zoom out" className="ml-9"><Icon w={16} h={16}><path stroke="#fff" d="M0 8h16" strokeWidth="3" /></Icon></button>
      <input
        type="range"
        aria-label="Zoom"
        min={10}
        max={190}
        defaultValue={100}
        className="ml-[14px] h-2 w-[200px] appearance-none rounded-full bg-[#666] [&::-webkit-slider-thumb]:h-7 [&::-webkit-slider-thumb]:w-9 [&::-webkit-slider-thumb]:appearance-none [&::-webkit-slider-thumb]:rounded-full [&::-webkit-slider-thumb]:bg-[#dcdcdc]"
      />
      <button type="button" aria-label="Zoom in" className="ml-[14px]"><Icon w={16} h={16}><path stroke="#fff" d="M0 8h16M8 0v16" /></Icon></button>
      <span className="mr-12 ml-[34px] w-[64px]">100%</span>
    </footer>
  )
}

export default function App() {
  return (
    <div className={clsx('flex h-screen flex-col overflow-hidden bg-[#282828]', UI)}>
      <TitleBar />
      <MenuBar />
      <Ribbon />
      <FormulaBar />
      <div className="h-1.5 shrink-0 border-y-2 border-[#a8a8a8] bg-white" />
      <Sheet />
      <SheetTabs />
      <StatusBar />
    </div>
  )
}
